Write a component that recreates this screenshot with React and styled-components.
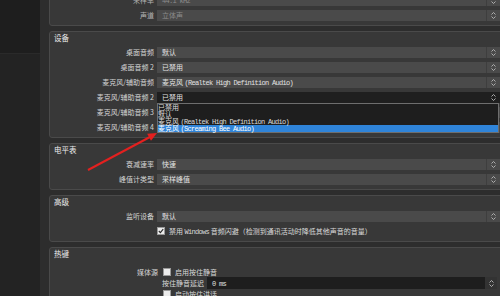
import styled, { createGlobalStyle } from "styled-components";

const GlobalStyle = createGlobalStyle`
  body {
    margin: 0;
    background: #2d2d2d;
    overflow: hidden;
    font-family: "Noto Sans CJK SC", "Liberation Sans", sans-serif;
  }
`;

const Page = styled.div`
  position: relative;
  width: 500px;
  height: 296px;
  overflow: hidden;
  display: flex;
  background: #2d2d2d;
`;
const Sidebar = styled.div`
  width: 40px;
  flex: none;
  display: flex;
  flex-direction: column;
  background: #232323;
`;
const SideTop = styled.div`
  height: 53px;
  background: #1e1e1e;
  border-bottom: 1px solid #2a2a2a;
`;
const Content = styled.div`
  flex: none;
  width: 465px;
  box-sizing: border-box;
  padding-left: 9px;
  margin-top: -6px;
  display: flex;
  flex-direction: column;
  gap: 5px;
`;
const Group = styled.section`
  border: 1px solid #4a4a4a;
  border-radius: 3px;
  background: #383838;
  padding-bottom: ${(p) => p.$pb || 0}px;
`;
const Title = styled.div`
  height: 15px;
  padding-left: 4px;
  line-height: 11px;
  font-size: 7.5px;
  color: #ececec;
`;
const Row = styled.div`
  display: grid;
  grid-template-columns: 104px 1fr;
  column-gap: 3px;
  padding-right: 4px;
  height: ${(p) => p.$h || 15}px;
  margin-top: ${(p) => p.$mt || 0}px;
`;
const Label = styled.div`
  text-align: right;
  font-size: 7px;
  line-height: 11px;
  white-space: nowrap;
  color: ${(p) => (p.$dim ? "#b4b4b4" : "#d4d4d4")};
`;
const Field = styled.div`
  position: relative;
  height: 11px;
  display: flex;
  background: ${(p) => (p.$open ? "#1f1f1f" : "#4a4a4a")};
`;
const ComboText = styled.div`
  flex: 1;
  padding-left: 5px;
  font-size: 7px;
  line-height: 11px;
  white-space: nowrap;
  overflow: hidden;
  color: ${(p) => (p.$dim ? "#8c8c8c" : "#e2e2e2")};
`;
const DropBtn = styled.div`
  width: 13px;
  display: flex;
  align-items: center;
  justify-content: center;
  border-left: 1px solid ${(p) => (p.$open ? "#1f1f1f" : "#3e3e3e")};
`;
const Latin = styled.span`
  font-family: "Liberation Mono", monospace;
  letter-spacing: -0.7px;
`;
const Popup = styled.div`
  position: absolute;
  left: 0;
  top: 100%;
  width: calc(100% - 1px);
  box-sizing: border-box;
  border: 1px solid #6e6e6e;
  background: #1e1e1e;
  z-index: 2;
`;
const PopItem = styled.div`
  height: 7px;
  line-height: 7px;
  font-size: 7px;
  white-space: nowrap;
  color: ${(p) => (p.$active ? "#ffffff" : "#dcdcdc")};
  background: ${(p) => (p.$active ? "#2f84d9" : "transparent")};
`;
const CheckLine = styled.div`
  display: flex;
  align-items: center;
  height: ${(p) => p.$h || 11}px;
  padding-left: ${(p) => p.$pl || 0}px;
`;
const Box = styled.div`
  width: 6px;
  height: 6px;
  flex: none;
  background: #ececec;
  border: 1px solid #9a9a9a;
  display: flex;
  align-items: center;
  justify-content: center;
`;
const CheckText = styled.span`
  margin-left: 4px;
  font-size: 7px;
  white-space: nowrap;
  color: #d8d8d8;
`;
const HotGrid = styled.div`
  display: grid;
  grid-template-columns: 108px 1fr;
  column-gap: 4px;
  padding: 4px 4px 0 0;
`;
const HotLabel = styled.div`
  text-align: right;
  font-size: 7px;
  line-height: 10px;
  color: #d4d4d4;
`;
const HotControls = styled.div`
  display: flex;
  flex-direction: column;
`;
const DelayRow = styled.div`
  display: flex;
  align-items: center;
  height: 12px;
`;
const DelayLabel = styled.span`
  width: 45px;
  font-size: 7px;
  color: #d8d8d8;
  white-space: nowrap;
`;
const Spin = styled.div`
  flex: 1;
  height: 12px;
  margin-right: 3px;
  display: flex;
  background: #1e1e1e;
`;
const SpinText = styled.div`
  flex: 1;
  padding-left: 5px;
  font-size: 7px;
  line-height: 12px;
  color: #e2e2e2;
`;
const SpinBtn = styled.div`
  width: 12px;
  display: flex;
  align-items: center;
  justify-content: center;
  background: #333333;
`;
const Overlay = styled.svg`
  position: absolute;
  left: 0;
  top: 0;
  pointer-events: none;
  z-index: 5;
`;

const Chevrons = () => (
  <svg width="7" height="9" viewBox="0 0 7 9">
    <path d="M1.5 3.5 L3.5 1.5 L5.5 3.5 M1.5 5.5 L3.5 7.5 L5.5 5.5" stroke="#b8b8b8" fill="none" strokeWidth="0.9" />
  </svg>
);

const Tick = () => (
  <svg width="6" height="6" viewBox="0 0 6 6">
    <path d="M0.8 3 L2.4 4.6 L5.2 1.2" stroke="#2a2a2a" fill="none" strokeWidth="1.1" />
  </svg>
);

function Combo({ children, dim, open, items }) {
  return (
    <Field $open={open}>
      <ComboText $dim={dim}>{children}</ComboText>
      <DropBtn $open={open}>
        <Chevrons />
      </DropBtn>
      {items && (
        <Popup>
          {items.map((it, i) => (
            <PopItem key={i} $active={i === items.length - 1}>
              {it}
            </PopItem>
          ))}
        </Popup>
      )}
    </Field>
  );
}

const realtek = (
  <>
    麦克风 <Latin>(Realtek High Definition Audio)</Latin>
  </>
);

const popupItems = [
  "已禁用",
  "默认",
  realtek,
  <>
    麦克风 <Latin>(Screaming Bee Audio)</Latin>
  </>,
];

export default function App() {
  return (
    <>
      <GlobalStyle />
      <Page>
        <Sidebar>
          <SideTop />
        </Sidebar>
        <Content>
          <Group>
            <Row>
              <Label $dim>采样率</Label>
              <Combo dim>
                <Latin>44.1 kHz</Latin>
              </Combo>
            </Row>
            <Row>
              <Label $dim>声道</Label>
              <Combo dim>立体声</Combo>
            </Row>
          </Group>

          <Group>
            <Title>设备</Title>
            <Row>
              <Label>桌面音频</Label>
              <Combo>默认</Combo>
            </Row>
            <Row>
              <Label>桌面音频 2</Label>
              <Combo>已禁用</Combo>
            </Row>
            <Row>
              <Label>麦克风/辅助音频</Label>
              <Combo>{realtek}</Combo>
            </Row>
            <Row>
              <Label>麦克风/辅助音频 2</Label>
              <Combo open items={popupItems}>
                已禁用
              </Combo>
            </Row>
            <Row>
              <Label>麦克风/辅助音频 3</Label>
              <Combo>已禁用</Combo>
            </Row>
            <Row>
              <Label>麦克风/辅助音频 4</Label>
              <Combo>已禁用</Combo>
            </Row>
          </Group>

          <Group>
            <Title>电平表</Title>
            <Row>
              <Label>衰减速率</Label>
              <Combo>快速</Combo>
            </Row>
            <Row>
              <Label>峰值计类型</Label>
              <Combo>采样峰值</Combo>
            </Row>
          </Group>

          <Group $pb={5}>
            <Title>高级</Title>
            <Row>
              <Label>监听设备</Label>
              <Combo>默认</Combo>
            </Row>
            <Row $h={11} $mt={-1}>
              <span />
              <CheckLine>
                <Box>
                  <Tick />
                </Box>
                <CheckText>
                  禁用 <Latin>Windows</Latin> 音频闪避（检测到通讯活动时降低其他声音的音量）
                </CheckText>
              </CheckLine>
            </Row>
          </Group>

          <Group>
            <Title>热键</Title>
            <HotGrid>
              <HotLabel>媒体源</HotLabel>
              <HotControls>
                <CheckLine $h={10} $pl={1}>
                  <Box />
                  <CheckText>启用按住静音</CheckText>
                </CheckLine>
                <DelayRow>
                  <DelayLabel>按住静音延迟</DelayLabel>
                  <Spin>
                    <SpinText>
                      <Latin>0 ms</Latin>
                    </SpinText>
                    <SpinBtn>
                      <Chevrons />
                    </SpinBtn>
                  </Spin>
                </DelayRow>
                <CheckLine $h={10} $pl={1}>
                  <Box />
                  <CheckText>启动按住讲话</CheckText>
                </CheckLine>
              </HotControls>
            </HotGrid>
          </Group>
        </Content>

        <Overlay width="500" height="296" viewBox="0 0 500 296">
          <line x1="88" y1="170" x2="150" y2="137" stroke="#e3201f" strokeWidth="2" />
          <polygon points="157,133 151,140.8 147.2,133.8" fill="#e3201f" />
        </Overlay>
      </Page>
    </>
  );
}
